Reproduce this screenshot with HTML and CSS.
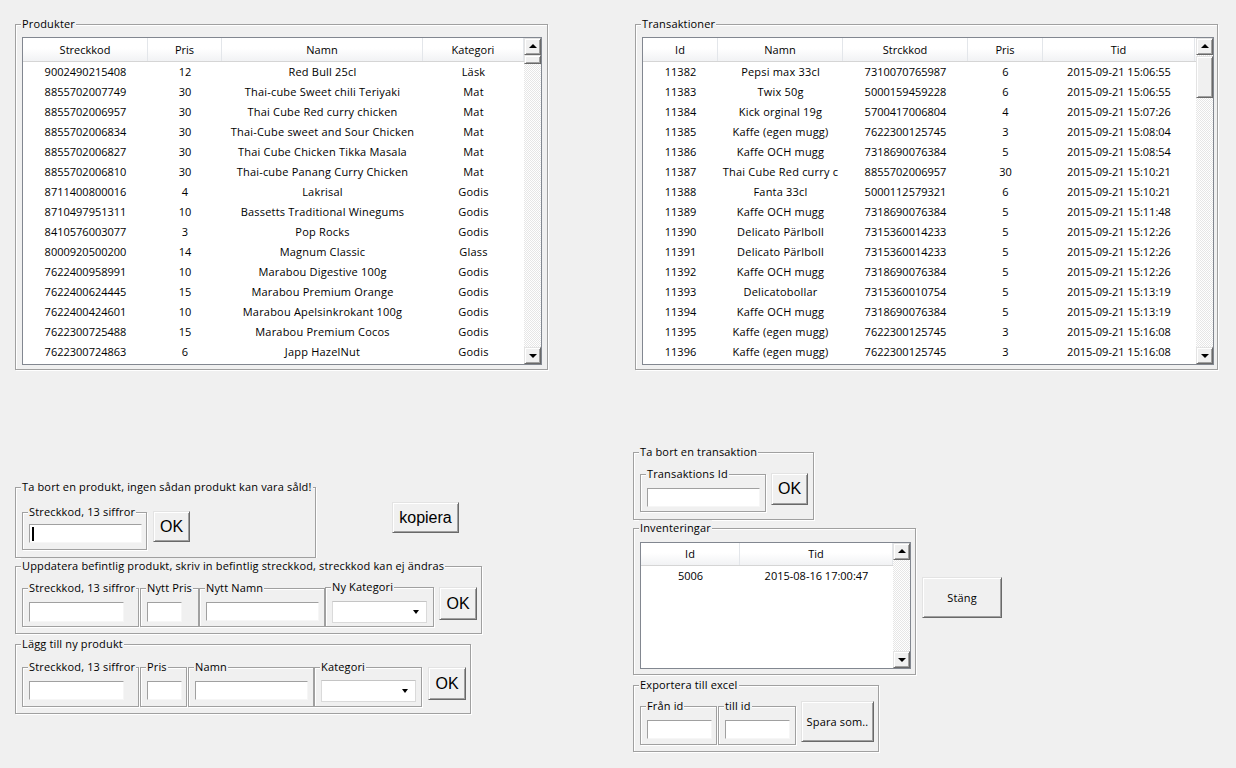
FILE: index.html
```html
<!DOCTYPE html>
<html lang="sv">
<head>
<meta charset="utf-8">
<title>Admin</title>
<link rel="stylesheet" href="styles.css">
</head>
<body>
<div class="app">
  <div class="top-row">
    <div class="group g-produkter">
      <span class="gtitle">Produkter</span>
      <div class="listview lv-produkter">
        <div class="lv-body">
          <div class="lv-head"><div>Streckkod</div><div>Pris</div><div>Namn</div><div>Kategori</div></div>
          <div class="lv-row"><div>9002490215408</div><div>12</div><div class="txt">Red Bull 25cl</div><div class="txt">Läsk</div></div>
          <div class="lv-row"><div>8855702007749</div><div>30</div><div class="txt">Thai-cube Sweet chili Teriyaki</div><div class="txt">Mat</div></div>
          <div class="lv-row"><div>8855702006957</div><div>30</div><div class="txt">Thai Cube Red curry chicken</div><div class="txt">Mat</div></div>
          <div class="lv-row"><div>8855702006834</div><div>30</div><div class="txt">Thai-Cube sweet and Sour Chicken</div><div class="txt">Mat</div></div>
          <div class="lv-row"><div>8855702006827</div><div>30</div><div class="txt">Thai Cube Chicken Tikka Masala</div><div class="txt">Mat</div></div>
          <div class="lv-row"><div>8855702006810</div><div>30</div><div class="txt">Thai-cube Panang Curry Chicken</div><div class="txt">Mat</div></div>
          <div class="lv-row"><div>8711400800016</div><div>4</div><div class="txt">Lakrisal</div><div class="txt">Godis</div></div>
          <div class="lv-row"><div>8710497951311</div><div>10</div><div class="txt">Bassetts Traditional Winegums</div><div class="txt">Godis</div></div>
          <div class="lv-row"><div>8410576003077</div><div>3</div><div class="txt">Pop Rocks</div><div class="txt">Godis</div></div>
          <div class="lv-row"><div>8000920500200</div><div>14</div><div class="txt">Magnum Classic</div><div class="txt">Glass</div></div>
          <div class="lv-row"><div>7622400958991</div><div>10</div><div class="txt">Marabou Digestive 100g</div><div class="txt">Godis</div></div>
          <div class="lv-row"><div>7622400624445</div><div>15</div><div class="txt">Marabou Premium Orange</div><div class="txt">Godis</div></div>
          <div class="lv-row"><div>7622400424601</div><div>10</div><div class="txt">Marabou Apelsinkrokant 100g</div><div class="txt">Godis</div></div>
          <div class="lv-row"><div>7622300725488</div><div>15</div><div class="txt">Marabou Premium Cocos</div><div class="txt">Godis</div></div>
          <div class="lv-row"><div>7622300724863</div><div>6</div><div class="txt">Japp HazelNut</div><div class="txt">Godis</div></div>
        </div>
        <div class="vscroll">
          <div class="sb-btn up"></div>
          <div class="sb-thumb thumb-small"></div>
          <div class="sb-space"></div>
          <div class="sb-btn down"></div>
        </div>
      </div>
    </div>

    <div class="group g-trans">
      <span class="gtitle">Transaktioner</span>
      <div class="listview lv-trans">
        <div class="lv-body">
          <div class="lv-head"><div>Id</div><div>Namn</div><div>Strckkod</div><div>Pris</div><div>Tid</div></div>
          <div class="lv-row"><div>11382</div><div class="txt">Pepsi max 33cl</div><div>7310070765987</div><div>6</div><div>2015-09-21 15:06:55</div></div>
          <div class="lv-row"><div>11383</div><div class="txt">Twix 50g</div><div>5000159459228</div><div>6</div><div>2015-09-21 15:06:55</div></div>
          <div class="lv-row"><div>11384</div><div class="txt">Kick orginal 19g</div><div>5700417006804</div><div>4</div><div>2015-09-21 15:07:26</div></div>
          <div class="lv-row"><div>11385</div><div class="txt">Kaffe (egen mugg)</div><div>7622300125745</div><div>3</div><div>2015-09-21 15:08:04</div></div>
          <div class="lv-row"><div>11386</div><div class="txt">Kaffe OCH mugg</div><div>7318690076384</div><div>5</div><div>2015-09-21 15:08:54</div></div>
          <div class="lv-row"><div>11387</div><div class="txt">Thai Cube Red curry c</div><div>8855702006957</div><div>30</div><div>2015-09-21 15:10:21</div></div>
          <div class="lv-row"><div>11388</div><div class="txt">Fanta 33cl</div><div>5000112579321</div><div>6</div><div>2015-09-21 15:10:21</div></div>
          <div class="lv-row"><div>11389</div><div class="txt">Kaffe OCH mugg</div><div>7318690076384</div><div>5</div><div>2015-09-21 15:11:48</div></div>
          <div class="lv-row"><div>11390</div><div class="txt">Delicato Pärlboll</div><div>7315360014233</div><div>5</div><div>2015-09-21 15:12:26</div></div>
          <div class="lv-row"><div>11391</div><div class="txt">Delicato Pärlboll</div><div>7315360014233</div><div>5</div><div>2015-09-21 15:12:26</div></div>
          <div class="lv-row"><div>11392</div><div class="txt">Kaffe OCH mugg</div><div>7318690076384</div><div>5</div><div>2015-09-21 15:12:26</div></div>
          <div class="lv-row"><div>11393</div><div class="txt">Delicatobollar</div><div>7315360010754</div><div>5</div><div>2015-09-21 15:13:19</div></div>
          <div class="lv-row"><div>11394</div><div class="txt">Kaffe OCH mugg</div><div>7318690076384</div><div>5</div><div>2015-09-21 15:13:19</div></div>
          <div class="lv-row"><div>11395</div><div class="txt">Kaffe (egen mugg)</div><div>7622300125745</div><div>3</div><div>2015-09-21 15:16:08</div></div>
          <div class="lv-row"><div>11396</div><div class="txt">Kaffe (egen mugg)</div><div>7622300125745</div><div>3</div><div>2015-09-21 15:16:08</div></div>
        </div>
        <div class="vscroll">
          <div class="sb-btn up"></div>
          <div class="sb-thumb thumb-large"></div>
          <div class="sb-space"></div>
          <div class="sb-btn down"></div>
        </div>
      </div>
    </div>
  </div>

  <div class="bottom">
    <div class="col-left">
      <div class="row-remove">
        <div class="group g-remove">
          <span class="gtitle">Ta bort en produkt, ingen sådan produkt kan vara såld!</span>
          <div class="group field f-remove">
            <span class="gtitle">Streckkod, 13 siffror</span>
            <div class="textbox tb-113"><span class="caret"></span></div>
          </div>
          <button class="btn btn-big ok-remove">OK</button>
        </div>
        <button class="btn btn-big btn-kopiera">kopiera</button>
      </div>

      <div class="group g-update">
        <span class="gtitle">Uppdatera befintlig produkt, skriv in befintlig streckkod, streckkod kan ej ändras</span>
        <div class="group field f-code"><span class="gtitle">Streckkod, 13 siffror</span><div class="textbox tb-95"></div></div>
        <div class="group field f-nprice"><span class="gtitle">Nytt Pris</span><div class="textbox tb-35"></div></div>
        <div class="group field f-nname"><span class="gtitle">Nytt Namn</span><div class="textbox tb-113"></div></div>
        <div class="group field f-ncat"><span class="gtitle">Ny Kategori</span><div class="combo"><span class="arrow"></span></div></div>
        <button class="btn btn-big ok-update">OK</button>
      </div>

      <div class="group g-add">
        <span class="gtitle">Lägg till ny produkt</span>
        <div class="group field f-code f-add"><span class="gtitle">Streckkod, 13 siffror</span><div class="textbox tb-95"></div></div>
        <div class="group field f-price f-add"><span class="gtitle">Pris</span><div class="textbox tb-35"></div></div>
        <div class="group field f-name f-add"><span class="gtitle">Namn</span><div class="textbox tb-113"></div></div>
        <div class="group field f-cat"><span class="gtitle">Kategori</span><div class="combo"><span class="arrow"></span></div></div>
        <button class="btn btn-big ok-add">OK</button>
      </div>
    </div>

    <div class="col-right">
      <div class="group g-deltrans">
        <span class="gtitle">Ta bort en transaktion</span>
        <div class="group field f-transid"><span class="gtitle">Transaktions Id</span><div class="textbox tb-113"></div></div>
        <button class="btn btn-big ok-trans">OK</button>
      </div>

      <div class="row-inv">
        <div class="group g-inv">
          <span class="gtitle">Inventeringar</span>
          <div class="listview lv-inv">
            <div class="lv-body">
              <div class="lv-head"><div>Id</div><div>Tid</div></div>
              <div class="lv-row"><div>5006</div><div>2015-08-16 17:00:47</div></div>
            </div>
            <div class="vscroll">
              <div class="sb-btn up"></div>
              <div class="sb-space"></div>
              <div class="sb-btn down"></div>
            </div>
          </div>
        </div>
        <button class="btn btn-stang">Stäng</button>
      </div>

      <div class="group g-export">
        <span class="gtitle">Exportera till excel</span>
        <div class="group field f-from"><span class="gtitle">Från id</span><div class="textbox tb-65"></div></div>
        <div class="group field f-to"><span class="gtitle">till id</span><div class="textbox tb-65"></div></div>
        <button class="btn btn-spara">Spara som..</button>
      </div>
    </div>
  </div>
</div>
</body>
</html>
```

FILE: styles.css
```css
* { box-sizing: border-box; }

html, body {
  margin: 0;
  background: #f0f0f0;
}

body {
  width: 1236px;
  height: 768px;
  overflow: hidden;
  font-family: "Open Sans", "Noto Sans", sans-serif;
  font-size: 11px;
  color: #000;
}

.app { padding-left: 15px; }

/* ---------- group boxes ---------- */
.group {
  position: relative;
  flex: none;
  border: 1px solid #a0a0a0;
  box-shadow: inset 1px 1px 0 #fff, 1px 1px 0 #fff;
}

.gtitle {
  position: absolute;
  top: -9px;
  left: 5px;
  padding: 0 1px;
  background: #f0f0f0;
  line-height: 15px;
  letter-spacing: 0.15px;
  white-space: nowrap;
}

/* ---------- top row ---------- */
.top-row {
  display: flex;
  padding-top: 24px;
}

.g-produkter {
  width: 533px;
  height: 346px;
  padding: 12px 0 0 6px;
}

.g-trans {
  width: 583px;
  height: 346px;
  margin-left: 87px;
  padding: 12px 0 0 6px;
}

/* ---------- list views ---------- */
.listview {
  display: flex;
  border: 1px solid #828790;
  background: #fff;
  overflow: hidden;
}

.lv-produkter { width: 520px; height: 328px; --cols: 125px 74px 201px 101px; }
.lv-trans { width: 572px; height: 328px; --cols: 75px 125px 125px 75px 152px; }
.lv-inv { width: 271px; height: 127px; --cols: 99px 153px; }

.lv-body {
  flex: 1;
  overflow: hidden;
}

.lv-head {
  display: grid;
  grid-template-columns: var(--cols);
  height: 24px;
  border-bottom: 1px solid #d5d5d5;
  background: linear-gradient(#ffffff, #ffffff 45%, #f1f2f4);
}

.lv-inv .lv-head { height: 23px; }

.lv-head > div {
  border-right: 1px solid #e3e6ea;
  text-align: center;
  line-height: 23px;
  white-space: nowrap;
  overflow: hidden;
}

.lv-inv .lv-head > div { line-height: 22px; }

.lv-row {
  display: grid;
  grid-template-columns: var(--cols);
  height: 20px;
  line-height: 20px;
}

.lv-row > div {
  text-align: center;
  white-space: nowrap;
  overflow: hidden;
}

.lv-row > .txt { letter-spacing: 0.2px; }

/* ---------- scrollbar ---------- */
.vscroll {
  flex: none;
  width: 17px;
  display: flex;
  flex-direction: column;
  background: repeating-conic-gradient(#ffffff 0 25%, #e6e6e6 0 50%) 0 0 / 2px 2px;
}

.sb-btn, .sb-thumb {
  flex: none;
  background: #f0f0f0;
  border: 1px solid;
  border-color: #e3e3e3 #696969 #696969 #e3e3e3;
  box-shadow: inset 1px 1px 0 #fff, inset -1px -1px 0 #a0a0a0;
}

.sb-btn {
  height: 17px;
  display: flex;
  align-items: center;
  justify-content: center;
}

.sb-btn::after {
  content: "";
  width: 0;
  height: 0;
  border-left: 4px solid transparent;
  border-right: 4px solid transparent;
}

.sb-btn.up::after { border-bottom: 4px solid #000; margin-top: -1px; }
.sb-btn.down::after { border-top: 4px solid #000; margin-top: 1px; }

.thumb-small { height: 9px; }
.thumb-large { height: 42px; margin-top: 1px; }

.sb-space { flex: 1; }

/* ---------- buttons ---------- */
.btn {
  flex: none;
  margin: 0;
  padding: 0;
  background: #f0f0f0;
  border: 1px solid;
  border-color: #e3e3e3 #696969 #696969 #e3e3e3;
  box-shadow: inset 1px 1px 0 #fff, inset -1px -1px 0 #a0a0a0;
  font-family: "Open Sans", "Noto Sans", sans-serif;
  font-size: 11px;
  letter-spacing: 0.15px;
  color: #000;
  text-align: center;
}

.btn-big {
  font-family: "Liberation Sans", Arial, sans-serif;
  font-size: 16px;
  letter-spacing: 0;
}

/* ---------- text boxes ---------- */
.textbox {
  height: 19px;
  background: #fff;
  border: 1px solid;
  border-color: #a0a0a0 #f6f6f6 #f6f6f6 #a0a0a0;
  display: flex;
  align-items: center;
}

.tb-113 { width: 113px; }
.tb-95 { width: 95px; height: 20px; }
.tb-35 { width: 35px; height: 20px; }
.tb-65 { width: 65px; }

.f-add .textbox { height: 19px; }

.caret {
  width: 2px;
  height: 14px;
  margin-left: 2px;
  background: #000;
}

.combo {
  position: relative;
  width: 95px;
  height: 22px;
  background: #fff;
  border: 1px solid #dadada;
  border-top-color: #c4c4c4;
}

.combo .arrow {
  position: absolute;
  right: 7px;
  top: 8px;
  width: 0;
  height: 0;
  border-left: 3.5px solid transparent;
  border-right: 3.5px solid transparent;
  border-top: 4px solid #000;
}

/* ---------- bottom area ---------- */
.bottom { display: flex; }

.col-left {
  width: 618px;
  flex: none;
  padding-top: 117px;
}

.col-right { padding-top: 82px; }

.field { padding: 13px 0 0 6px; }

/* remove product */
.row-remove {
  display: flex;
  align-items: flex-start;
}

.g-remove {
  width: 301px;
  height: 71px;
  padding: 23px 0 0 6px;
  display: flex;
  align-items: flex-start;
}

.f-remove {
  width: 125px;
  height: 38px;
  margin-top: 1px;
  padding-top: 11px;
}

.ok-remove {
  width: 37px;
  height: 31px;
  margin-left: 6px;
}

.btn-kopiera {
  width: 67px;
  height: 31px;
  margin-left: 76px;
  margin-top: 15px;
}

/* update product */
.g-update {
  width: 467px;
  height: 68px;
  margin-top: 8px;
  padding: 20px 0 0 6px;
  display: flex;
  align-items: flex-start;
}

.f-code { width: 117px; height: 39px; margin-top: 1px; }
.f-nprice { width: 59px; height: 39px; margin-top: 1px; margin-left: 1px; }
.f-nname { width: 126px; height: 39px; margin-top: 1px; }
.f-ncat { width: 109px; height: 40px; }

.ok-update {
  width: 38px;
  height: 33px;
  margin-left: 5px;
}

/* add product */
.g-add {
  width: 456px;
  height: 70px;
  margin-top: 10px;
  padding: 22px 0 0 6px;
  display: flex;
  align-items: flex-start;
}

.g-add .f-code { height: 40px; margin-top: 0; }
.f-price { width: 47px; height: 40px; margin-left: 1px; }
.f-name { width: 126px; height: 40px; margin-left: 1px; }
.f-cat { width: 108px; height: 40px; padding-top: 12px; }

.ok-add {
  width: 38px;
  height: 33px;
  margin-left: 6px;
}

/* delete transaction */
.g-deltrans {
  width: 181px;
  height: 68px;
  padding: 20px 0 0 6px;
  display: flex;
  align-items: flex-start;
}

.f-transid { width: 126px; height: 38px; margin-top: 1px; }

.ok-trans {
  width: 37px;
  height: 32px;
  margin-left: 5px;
}

/* inventories */
.row-inv {
  display: flex;
  align-items: flex-start;
  margin-top: 8px;
}

.g-inv {
  width: 283px;
  height: 147px;
  padding: 13px 0 0 6px;
}

.btn-stang {
  width: 80px;
  height: 41px;
  margin-left: 6px;
  margin-top: 49px;
}

/* export */
.g-export {
  width: 246px;
  height: 67px;
  margin-top: 10px;
  padding: 15px 0 0 6px;
  display: flex;
  align-items: flex-start;
}

.f-from { width: 77px; height: 39px; margin-top: 5px; }
.f-to { width: 78px; height: 39px; margin-top: 5px; margin-left: 1px; }

.btn-spara {
  width: 73px;
  height: 41px;
  margin-left: 5px;
}
```
